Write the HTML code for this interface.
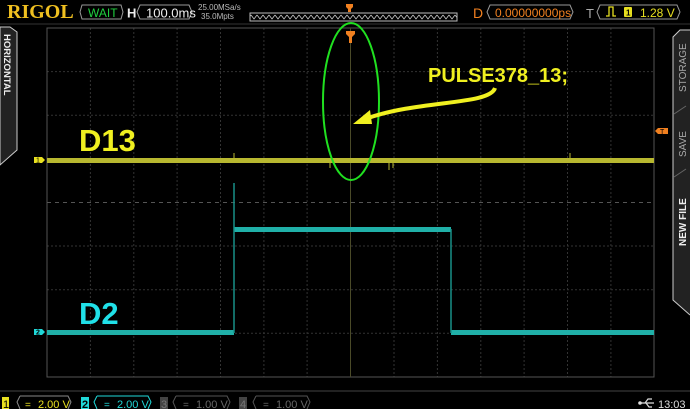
<!DOCTYPE html>
<html><head><style>
html,body{margin:0;padding:0;background:#000;}
body{width:690px;height:409px;overflow:hidden;position:relative;font-family:"Liberation Sans",sans-serif;}
</style></head><body>
<svg width="690" height="409" style="position:absolute;left:0;top:0" font-family="Liberation Sans, sans-serif">
<defs>
<pattern id="zz" x="251" y="14" width="6" height="6" patternUnits="userSpaceOnUse"><path d="M0 1 L3 5 L6 1" fill="none" stroke="#ccc" stroke-width="0.8"/></pattern>
<clipPath id="cl"><rect x="0" y="0" width="690" height="409"/></clipPath>
</defs>
<!-- header -->
<text x="7" y="18" font-family="Liberation Serif, serif" font-weight="bold" font-size="20" fill="#f0c020">RIGOL</text>
<path d="M82 5 L121 5 L123 12 L121 19 L82 19 L80 12 Z" fill="none" stroke="#999" stroke-width="1"/>
<text x="88" y="17" font-size="12" fill="#20d040">WAIT</text>
<text x="127" y="17.5" font-size="13" font-weight="bold" fill="#eee">H</text>
<path d="M140 5 L189 5 L192 12 L189 19 L140 19 L137 12 Z" fill="none" stroke="#999"/>
<text x="146" y="17.5" font-size="13" fill="#eee">100.0ms</text>
<text x="198" y="10" font-size="8" fill="#bbb">25.00MSa/s</text>
<text x="201" y="19" font-size="8" fill="#bbb">35.0Mpts</text>
<rect x="250" y="13" width="207" height="8" fill="url(#zz)" stroke="#bbb" stroke-width="1"/>
<path d="M346 4 h7 v3 l-2 2 v3 h-3 v-3 l-2-2 z" fill="#f08020"/>
<text x="473" y="18" font-size="14" fill="#f08020">D</text>
<path d="M490 5 L570 5 L573 12 L570 19 L490 19 L487 12 Z" fill="none" stroke="#999"/>
<text x="495" y="17" font-size="12" fill="#f08020">0.00000000ps</text>
<text x="586" y="18" font-size="13" fill="#aaa">T</text>
<path d="M600 5 L677 5 L680 12 L677 19 L600 19 L597 12 Z" fill="none" stroke="#999"/>
<path d="M606 16 h3 v-9 h4 v9 h3" fill="none" stroke="#e8e020" stroke-width="1.3"/>
<rect x="624" y="7" width="8" height="10" rx="1" fill="#e8e020"/>
<text x="626" y="15.5" font-size="8" font-weight="bold" fill="#000">1</text>
<text x="640" y="17" font-size="12" fill="#e8e020">1.28 V</text>
<line x1="0" y1="24" x2="690" y2="24" stroke="#333"/>
<!-- left tab -->
<path d="M0 27 L10 27 L17 32 L17 150 L0 165 Z" fill="#222" stroke="#ccc" stroke-width="1"/>
<text transform="translate(4,34) rotate(90)" font-size="9.5" font-weight="bold" fill="#eee">HORIZONTAL</text>
<!-- right tab -->
<path d="M690 30 L680 30 L673 37 L673 300 L690 315" fill="#222" stroke="#ccc" stroke-width="1"/>
<line x1="674" y1="114" x2="686" y2="106" stroke="#666"/>
<line x1="674" y1="177" x2="686" y2="169" stroke="#666"/>
<text transform="translate(686,92) rotate(-90)" font-size="10" fill="#aaa">STORAGE</text>
<text transform="translate(686,157) rotate(-90)" font-size="10" fill="#aaa">SAVE</text>
<text transform="translate(686,246) rotate(-90)" font-size="10" font-weight="bold" fill="#eee">NEW FILE</text>
<!-- grid -->
<g stroke="#333" stroke-width="1" stroke-dasharray="2,2">
<line x1="90.4" y1="28" x2="90.4" y2="377"/><line x1="133.8" y1="28" x2="133.8" y2="377"/><line x1="177.1" y1="28" x2="177.1" y2="377"/><line x1="220.5" y1="28" x2="220.5" y2="377"/><line x1="263.9" y1="28" x2="263.9" y2="377"/><line x1="307.1" y1="28" x2="307.1" y2="377"/><line x1="394" y1="28" x2="394" y2="377"/><line x1="437.4" y1="28" x2="437.4" y2="377"/><line x1="480.8" y1="28" x2="480.8" y2="377"/><line x1="524.1" y1="28" x2="524.1" y2="377"/><line x1="567.5" y1="28" x2="567.5" y2="377"/><line x1="610.9" y1="28" x2="610.9" y2="377"/>
<line x1="47" y1="71.6" x2="654" y2="71.6"/><line x1="47" y1="115.2" x2="654" y2="115.2"/><line x1="47" y1="158.9" x2="654" y2="158.9"/><line x1="47" y1="246" x2="654" y2="246"/><line x1="47" y1="289.7" x2="654" y2="289.7"/><line x1="47" y1="333.3" x2="654" y2="333.3"/>
</g>
<g stroke="#555" stroke-width="1">
<rect x="47" y="28" width="607" height="349" fill="none"/>
<line x1="350.5" y1="28" x2="350.5" y2="377" stroke="#4a4a28"/>
<line x1="47" y1="202.5" x2="654" y2="202.5" stroke-dasharray="4,4"/>
</g>
<!-- traces -->
<rect x="47" y="158" width="607" height="5" fill="#b8b830"/>
<g stroke="#b8b830" stroke-width="1"><line x1="234" y1="153" x2="234" y2="158"/><line x1="389" y1="163" x2="389" y2="170"/><line x1="330" y1="163" x2="330" y2="168"/><line x1="570" y1="153" x2="570" y2="158"/><line x1="393" y1="163" x2="393" y2="168"/></g>
<rect x="47" y="330" width="187" height="5" fill="#20b0a8"/>
<rect x="234" y="227" width="217" height="5" fill="#20b0a8"/>
<rect x="451" y="330" width="203" height="5" fill="#20b0a8"/>
<line x1="234" y1="183" x2="234" y2="333" stroke="#189088" stroke-width="1.5"/>
<line x1="451" y1="229" x2="451" y2="333" stroke="#189088" stroke-width="1.5"/>
<!-- markers -->
<path d="M34 157 h8 l3 3 l-3 3 h-8 z" fill="#e8e020"/><text x="36" y="162.5" font-size="7" fill="#000">1</text>
<path d="M34 329 h8 l3 3 l-3 3 h-8 z" fill="#20d8d8"/><text x="36" y="334.5" font-size="7" font-weight="bold" fill="#000">2</text>
<path d="M668 128 h-10 l-3 3 l3 3 h10 z" fill="#f08020"/><text x="660" y="134" font-size="7" fill="#000">T</text>
<path d="M346 31 h9 v3 l-3 3 v6 h-3 v-6 l-3-3 z" fill="#f08020"/>
<!-- annotations -->
<text x="79" y="151" font-size="31" font-weight="bold" fill="#f0f020">D13</text>
<text x="79" y="324" font-size="31" font-weight="bold" fill="#20e0e8">D2</text>
<ellipse cx="351" cy="101.5" rx="28" ry="78.5" fill="none" stroke="#20e020" stroke-width="2"/>
<text x="428" y="82" font-size="20" font-weight="bold" fill="#f0f020">PULSE378_13;</text>
<path d="M495 88 C490 105 420 100 368 118" fill="none" stroke="#f0f020" stroke-width="4"/>
<path d="M353 124 L370 110 L372 124 Z" fill="#f0f020"/>
<!-- bottom -->
<line x1="0" y1="391" x2="690" y2="391" stroke="#444"/>
<rect x="2" y="397" width="7" height="12" fill="#e8e020"/><text x="3" y="408" font-size="11" fill="#000">1</text>
<path d="M20 396 L68 396 L71 402 L68 409" fill="none" stroke="#888"/><path d="M20 396 L17 402 L20 409" fill="none" stroke="#888"/>
<text x="25" y="408" font-size="10" fill="#e8e020">=</text><text x="38" y="408" font-size="11" fill="#e8e020">2.00 V</text>
<rect x="81" y="397" width="8" height="12" fill="#20d8d8"/><text x="82" y="408" font-size="11" font-weight="bold" fill="#000">2</text>
<path d="M97 396 L148 396 L151 402 L148 409" fill="none" stroke="#20d8d8"/><path d="M97 396 L94 402 L97 409" fill="none" stroke="#20d8d8"/>
<text x="104" y="408" font-size="10" fill="#20d8d8">=</text><text x="117" y="408" font-size="11" fill="#20d8d8">2.00 V</text>
<rect x="160" y="397" width="8" height="12" fill="#444"/><text x="161" y="408" font-size="11" fill="#777">3</text>
<path d="M176 396 L227 396 L230 402 L227 409" fill="none" stroke="#555"/><path d="M176 396 L173 402 L176 409" fill="none" stroke="#555"/>
<text x="183" y="408" font-size="10" fill="#666">=</text><text x="196" y="408" font-size="11" fill="#666">1.00 V</text>
<rect x="239" y="397" width="8" height="12" fill="#444"/><text x="240" y="408" font-size="11" fill="#777">4</text>
<path d="M256 396 L307 396 L310 402 L307 409" fill="none" stroke="#555"/><path d="M256 396 L253 402 L256 409" fill="none" stroke="#555"/>
<text x="263" y="408" font-size="10" fill="#666">=</text><text x="276" y="408" font-size="11" fill="#666">1.00 V</text>
<path d="M640 403 h14 M645 403 l3-4 h4 M646 403 l3 4 h3" fill="none" stroke="#ddd" stroke-width="1.2"/><circle cx="640" cy="403" r="1.8" fill="#ddd"/>
<text x="658" y="408" font-size="11" fill="#ddd">13:03</text>
</svg>
</body></html>
